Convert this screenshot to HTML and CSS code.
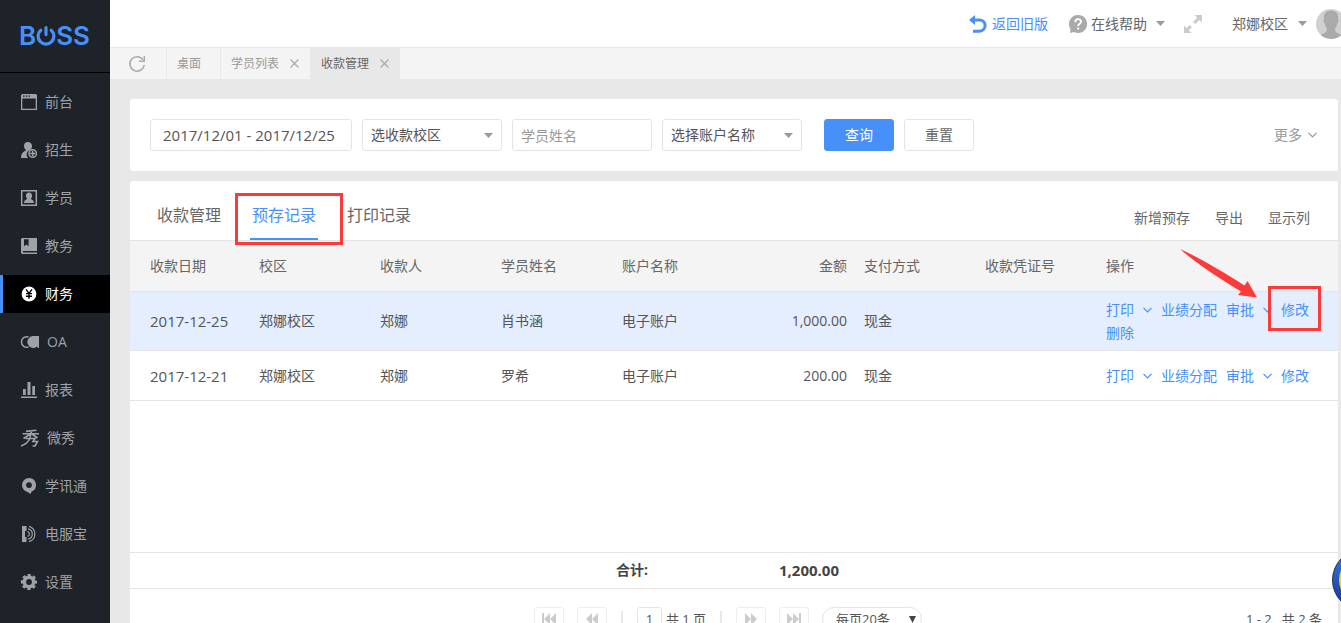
FILE: index.html
```html
<!DOCTYPE html>
<html lang="zh-CN">
<head>
<meta charset="utf-8">
<title>收款管理</title>
<link rel="stylesheet" href="styles.css">
</head>
<body>
<svg class="defs" aria-hidden="true">
  <symbol id="chev" viewBox="0 0 9 6"><path d="M.5 .8 4.5 4.8 8.5 .8" fill="none" stroke="currentColor" stroke-width="1.2"/></symbol>
  <symbol id="caret" viewBox="0 0 9 5"><path d="M0 0h9L4.500 5z" fill="currentColor"/></symbol>
  <symbol id="close" viewBox="0 0 8 8"><path d="M.5 .5l7 7M7.500 .5l-7 7" fill="none" stroke="currentColor" stroke-width="1.1"/></symbol>
</svg>
<div class="app">
  <aside class="sidebar">
    <div class="logo"><span>B</span><svg width="20" height="20" viewBox="0 0 20 20" fill="none" stroke="currentColor" stroke-width="3.200" stroke-linecap="round"><path d="M4.800 4.200A7.900 7.900 0 1 0 15.200 4.200M10 1.600v7"/></svg><span>SS</span></div>
    <nav class="menu">
      <a href="#"><svg viewBox="0 0 18 18"><path fill="currentColor" fill-rule="evenodd" d="M2.500 1h13A1.500 1.500 0 0 1 17 2.500V17H1V2.500A1.500 1.500 0 0 1 2.500 1zM2.300 5.600v10.100h13.400V5.600zM3 2.500v1.300h1.500V2.500zm2.700 0v1.300h1.500V2.500zm2.700 0v1.300h1.500V2.500z"/></svg>前台</a>
      <a href="#"><svg viewBox="0 0 18 18"><path fill="currentColor" d="M8 1a4 4 0 0 1 4 4.400c-.1 1.700-.8 2.700-1.500 3.300A4.800 4.800 0 0 0 8.200 17H1c0-4 1.500-6.200 4.800-7.500v-.8C4.700 8 4 6.500 4 5a4 4 0 0 1 4-4z"/><circle cx="12.700" cy="12.500" r="3.700" fill="none" stroke="currentColor" stroke-width="1.500"/><path d="M12.700 10v5M10.200 12.500h5" stroke="currentColor" stroke-width="1.500"/></svg>招生</a>
      <a href="#"><svg viewBox="0 0 18 18"><path fill="none" stroke="currentColor" stroke-width="1.500" d="M1.700 1.700h14.600v14.600H1.700z"/><path fill="currentColor" d="M9 3.500c2 0 3.100 1.400 3.100 3.200 0 1.300-.6 2.300-1.300 2.900.2 1.200 3 1 3.200 4.400H4c.2-3.400 3-3.200 3.200-4.400-.7-.6-1.300-1.600-1.300-2.900C5.900 4.900 7 3.500 9 3.500z"/></svg>学员</a>
      <a href="#"><svg viewBox="0 0 18 18"><path fill="currentColor" fill-rule="evenodd" d="M2.500 1H17v13H3.500c-1.100 0-1.100 1.400 0 1.400H17V17H2.800C1.700 17 1 16.300 1 15.200V2.500C1 1.600 1.600 1 2.500 1zM4 2.200v7l2.300-1.800 2.300 1.800v-7z"/></svg>教务</a>
      <a href="#" class="on"><svg viewBox="0 0 18 18"><circle cx="9" cy="9" r="7.400" fill="currentColor"/><path d="M6 4.300l3 4 3-4M9 8.300v5.500M6 8.600h6M6 11.200h6" fill="none" stroke="#000" stroke-width="1.400"/></svg>财务</a>
      <a href="#" class="wide"><svg viewBox="0 0 20 18"><path d="M8.500 4A5.300 5.300 0 1 0 8.500 14" fill="none" stroke="currentColor" stroke-width="1.500"/><path fill="currentColor" d="M12.800 3H19v12h-1.200l-.5-1.500A6 6 0 1 1 12.800 3z"/></svg>OA</a>
      <a href="#"><svg viewBox="0 0 18 18"><path fill="currentColor" d="M1 15.500h16V17H1zM3 8h2.700v6H3zM7.500 1h3v13h-3zM12.300 5H15v9h-2.700z"/></svg>报表</a>
      <a href="#" class="wide"><svg viewBox="0 0 20 18" fill="none" stroke="currentColor" stroke-width="1.600"><path d="M16.500 1.200 6 2.400M2.500 4.800h16.500M11.500 2 10 8.500M10.500 5 3.500 9.500M12 5l5.500 4M5.500 9.500h4.300C8.500 12.500 5.500 15.500 1 17M9 9.500h6l-2 3h4.500L15 17h-2.500"/></svg>微秀</a>
      <a href="#"><svg viewBox="0 0 18 18"><path fill="currentColor" fill-rule="evenodd" d="M9 1a7.100 7.100 0 0 1 2.500 13.700L10.500 17 7.500 15A7.100 7.100 0 0 1 9 1zm0 4.200a2.900 2.900 0 1 0 0 5.800 2.900 2.900 0 0 0 0-5.800z"/></svg>学讯通</a>
      <a href="#"><svg viewBox="0 0 18 18"><path fill="currentColor" d="M2 1h4.500v5H5v6h1.500v5H2z"/><path d="M7.500 6.500a2.600 2.600 0 0 1 0 5M8 3.800a5.300 5.300 0 0 1 0 10.400M9 1.300a8 8 0 0 1 0 15.400" fill="none" stroke="currentColor" stroke-width="1.200"/></svg>电服宝</a>
      <a href="#"><svg viewBox="0 0 18 18"><circle cx="9" cy="9" r="4.700" fill="none" stroke="currentColor" stroke-width="3.600"/><circle cx="9" cy="9" r="7" fill="none" stroke="currentColor" stroke-width="2.200" stroke-dasharray="3.200 2.298" stroke-dashoffset="1.600"/></svg>设置</a>
    </nav>
  </aside>

  <main class="main">
    <header class="topbar">
      <a href="#" class="back"><svg width="18" height="18" viewBox="0 0 18 18"><path d="M4 5h6.500a5.600 5.600 0 0 1 0 11.200H4" fill="none" stroke="currentColor" stroke-width="3"/><path fill="currentColor" d="M0 5 6 0v10z"/></svg>返回旧版</a>
      <button class="help"><svg width="18" height="18" viewBox="0 0 18 18"><path fill="#aaa" d="M9 0a9 9 0 1 1-4 17l-4 1 .5-4A9 9 0 0 1 9 0z"/><path d="M6.200 7.200c0-4 5.800-4 5.800-.6 0 2.200-2.800 2-2.800 4.400M9.200 12.500v2" fill="none" stroke="#fff" stroke-width="1.900"/></svg>在线帮助<svg class="caret"><use href="#caret"/></svg></button>
      <button class="full" aria-label="全屏"><svg width="18" height="18" viewBox="0 0 18 18"><path fill="#ccc" d="M10.500 0H18v7.500l-2.600-2.600-4.200 4.200-2.200-2.200 4.200-4.200zM0 10.500l2.600 2.600 3.200-3.200L8 12.100l-3.200 3.200L7.500 18H0z"/></svg></button>
      <button class="campus">郑娜校区<svg class="caret"><use href="#caret"/></svg></button>
      <svg class="avatar" viewBox="0 0 30 30"><defs><clipPath id="av"><circle cx="15" cy="15" r="15"/></clipPath></defs><g clip-path="url(#av)"><path fill="#d0d0d0" d="M0 0h30v30H0z"/><path fill="#aaa" d="M15 1.500c5 0 7.500 3 7 8.500 1 1 .6 3.500-.8 4.200-.6 3-1.200 4.300-2.200 5.300 0 3.500 1.500 4.500 6 6V30H5v-4.500c4.500-1.500 6-2.500 6-6-1-1-1.600-2.300-2.200-5.300C7.400 13.500 7 11 8 10c-.5-5.500 2-8.500 7-8.500z"/></g></svg>
    </header>

    <nav class="pages">
      <button class="refresh" aria-label="刷新"><svg width="18" height="18" viewBox="0 0 18 18"><path d="M15 4.800A7.200 7.200 0 1 0 16.200 10" fill="none" stroke="#aaa" stroke-width="1.500"/><path fill="none" stroke="#aaa" stroke-width="1.500" d="M16.300 1v5.300H11"/></svg></button>
      <a href="#" class="home">桌面</a>
      <a href="#">学员列表<svg><use href="#close"/></svg></a>
      <a href="#" class="on">收款管理<svg><use href="#close"/></svg></a>
    </nav>

    <div class="content">
      <form class="card filters">
        <input class="date" type="text" aria-label="日期" value="2017/12/01 - 2017/12/25">
        <span class="select"><select aria-label="收款校区"><option>选收款校区</option></select><svg class="caret"><use href="#caret"/></svg></span>
        <input type="text" aria-label="学员姓名" placeholder="学员姓名">
        <span class="select"><select aria-label="账户名称"><option>选择账户名称</option></select><svg class="caret"><use href="#caret"/></svg></span>
        <button type="button" class="btn primary">查询</button>
        <button type="button" class="btn">重置</button>
        <button type="button" class="more">更多<svg class="chev"><use href="#chev"/></svg></button>
      </form>

      <section class="card records">
        <div class="head">
          <nav class="tabs">
            <a href="#">收款管理</a>
            <a href="#" class="on">预存记录<i class="mark mark-tab"></i></a>
            <a href="#">打印记录</a>
          </nav>
          <div class="tools"><a href="#">新增预存</a><a href="#">导出</a><a href="#">显示列</a></div>
        </div>
        <div class="body">
          <table>
            <colgroup><col class="c-first"><col class="c" span="7"><col></colgroup>
            <thead><tr><th>收款日期</th><th>校区</th><th>收款人</th><th>学员姓名</th><th>账户名称</th><th class="num">金额</th><th>支付方式</th><th>收款凭证号</th><th>操作</th></tr></thead>
            <tbody>
              <tr class="sel"><td class="day">2017-12-25</td><td>郑娜校区</td><td>郑娜</td><td>肖书涵</td><td>电子账户</td><td class="num">1,000.00</td><td>现金</td><td></td>
                <td><div class="ops"><a href="#">打印<svg class="chev"><use href="#chev"/></svg></a><a href="#">业绩分配</a><a href="#">审批<svg class="chev"><use href="#chev"/></svg></a><a href="#" class="edit">修改<i class="mark mark-edit"></i><svg class="arrow" viewBox="0 0 78 50"><path fill="#fb3a3a" d="M0 0C18 8 42 22 64.500 36.500L67.500 32 77 48.500 58 46l3-3.500C42 31 18 16 0 0z"/></svg></a><a href="#">删除</a></div></td></tr>
              <tr><td class="day">2017-12-21</td><td>郑娜校区</td><td>郑娜</td><td>罗希</td><td>电子账户</td><td class="num">200.00</td><td>现金</td><td></td>
                <td><div class="ops"><a href="#">打印<svg class="chev"><use href="#chev"/></svg></a><a href="#">业绩分配</a><a href="#">审批<svg class="chev"><use href="#chev"/></svg></a><a href="#">修改</a></div></td></tr>
            </tbody>
          </table>
        </div>
        <table class="total">
          <colgroup><col class="c-first"><col class="c" span="7"><col></colgroup>
          <tbody><tr><td colspan="4"></td><td class="sum">合计:</td><td class="num">1,200.00</td><td colspan="3"></td></tr></tbody>
        </table>
        <div class="pager">
          <div class="ctrl">
            <button aria-label="首页"><svg viewBox="0 0 16 12"><path d="M1 0h2v12H1zM9 0v12L3 6zM15 0v12L9 6z"/></svg></button>
            <button aria-label="上一页"><svg viewBox="0 0 16 12"><path d="M8 0v12L2 6zM14 0v12L8 6z"/></svg></button>
            <i class="bar"></i>
            <label class="num-page"><input type="text" value="1" aria-label="页码">共 1 页</label>
            <i class="bar"></i>
            <button aria-label="下一页"><svg viewBox="0 0 16 12"><path d="M2 0v12l6-6zM8 0v12l6-6z"/></svg></button>
            <button aria-label="末页"><svg viewBox="0 0 16 12"><path d="M1 0v12l6-6zM7 0v12l6-6zM13 0h2v12h-2z"/></svg></button>
            <span class="select size"><select aria-label="每页条数"><option>每页20条</option></select><svg class="caret" viewBox="0 0 7 7" preserveAspectRatio="none"><path d="M0 0h7L3.500 7z" fill="currentColor"/></svg></span>
          </div>
          <span class="range">1 - 2 &nbsp; 共 2 条</span>
        </div>
      </section>
    </div>
  </main>
</div>
<svg class="ball" viewBox="0 0 62 62"><defs><linearGradient id="bl" x2="0" y2="1"><stop offset="0" stop-color="#3b7de0"/><stop offset="1" stop-color="#14309c"/></linearGradient></defs><circle cx="31" cy="31" r="30.500" fill="url(#bl)" stroke="#234"/><circle cx="31" cy="31" r="24" fill="#f5d418"/></svg>
</body>
</html>
```

FILE: styles.css
```css
* { box-sizing: border-box; }
body {
  margin: 0;
  height: 100vh;
  overflow: hidden;
  background: #e8e8e8;
  color: #555;
  font: 14px/20px "Open Sans", "Noto Sans CJK SC", sans-serif;
}
a { color: inherit; text-decoration: none; }
button, input, select { font: inherit; color: inherit; }
button { border: 0; padding: 0; background: none; }
.defs { position: absolute; width: 0; height: 0; }
.caret { width: 9px; height: 5px; color: #999; }
.chev { width: 9px; height: 6px; }

.app { display: flex; height: 100vh; }
.sidebar { flex: none; width: 110px; background: #1e2229; color: #9ea3aa; }
.logo {
  display: flex;
  align-items: center;
  height: 73px;
  padding-left: 19px;
  border-bottom: 1px solid #000;
  color: #478ff9;
  font: 600 26px/74px Inter, sans-serif;
}
.menu { display: flex; flex-direction: column; gap: 10px; padding-top: 10px; }
.menu a { display: flex; align-items: center; gap: 7px; height: 38px; padding-left: 20px; }
.menu svg { width: 18px; height: 18px; }
.menu .wide svg { width: 20px; }
.menu .on { background: #000; color: #fff; border-left: 3px solid #478ff9; padding-left: 17px; }

.main { flex: 1; min-width: 0; display: flex; flex-direction: column; }
.topbar {
  flex: none;
  display: flex;
  align-items: center;
  justify-content: flex-end;
  height: 48px;
  background: #fff;
  border-bottom: 1px solid #e8e8e8;
  overflow: hidden;
}
.topbar a, .topbar button { display: flex; align-items: center; }
.back { gap: 5px; color: #478ff9; }
.help { gap: 4px; margin-left: 21px; color: #666; }
.help .caret { margin-left: 5px; }
.full { margin-left: 19px; }
.campus { gap: 10px; margin-left: 30px; color: #666; }
.avatar { flex: none; width: 30px; height: 30px; margin: 0 -5px 0 9px; }

.pages { flex: none; display: flex; height: 31px; background: #f4f4f4; color: #999; font-size: 12px; line-height: 32px; }
.pages a { display: flex; align-items: center; gap: 11px; padding: 0 11px 0 10px; border-left: 1px solid #e8e8e8; }
.pages .home { padding-right: 19px; }
.pages a svg { width: 9px; height: 9px; color: #aaa; }
.pages .on { background: #e8e8e8; color: #666; }
.refresh { display: flex; align-items: center; width: 56px; padding-left: 18px; }

.content { display: flex; flex-direction: column; gap: 10px; padding: 20px 3px 0 20px; }
.card { background: #fff; border-radius: 3px; }
.filters { display: flex; align-items: center; gap: 10px; padding: 20px; }
.filters input, .filters select {
  width: 140px;
  height: 32px;
  padding: 0 8px;
  border: 1px solid #e4e4e4;
  border-radius: 3px;
  background: #fff;
}
.filters .date { width: 202px; padding: 0 12px; font-size: 15px; }
input::placeholder { color: #999; }
.select { position: relative; display: flex; }
.select select { appearance: none; }
.select .caret { position: absolute; right: 12px; top: 50%; margin-top: -2px; pointer-events: none; }
.filters .caret { right: 9px; }
.btn { width: 70px; height: 32px; border: 1px solid #e4e4e4; border-radius: 3px; color: #666; }
.primary { margin-left: 12px; border-color: #478ff9; background: #478ff9; color: #fff; }
.more { display: flex; align-items: center; gap: 6px; margin: 0 1px 0 auto; color: #999; }

.head { display: flex; justify-content: space-between; height: 60px; padding: 0 28px 0 25px; border-bottom: 1px solid #e4e4e4; color: #666; }
.tabs { display: flex; gap: 27px; font-size: 16px; }
.tabs a { position: relative; padding: 24px 2px 0; }
.tabs .on { color: #478ff9; border-bottom: 2px solid #478ff9; }
.tools { display: flex; gap: 25px; padding-top: 27px; }
.body { min-height: 311px; }
table { width: 100%; border-collapse: separate; border-spacing: 0; table-layout: fixed; }
.c-first { width: 120px; }
.c { width: 121px; }
th, td { height: 50px; padding: 0 8px 0 9px; border-bottom: 1px solid #e4e4e4; text-align: left; font-weight: 400; white-space: nowrap; }
th { height: 51px; background: #f4f4f4; color: #666; }
th:first-child, td:first-child { padding-left: 20px; }
.day { font-size: 15px; }
.num { text-align: right; }
.sel td { height: 59px; background: #e5eeff; }
.ops { display: flex; flex-wrap: wrap; gap: 3px 9px; color: #478ff9; }
.ops a { position: relative; display: flex; align-items: center; gap: 9px; }

.mark { position: absolute; border: 3px solid #fb3a3a; }
.mark-tab { inset: 12px -25px -7px -15px; }
.edit .mark-edit { inset: -14px -12px -11px -13px; }
.edit .arrow { position: absolute; right: 51px; bottom: 21px; width: 78px; height: 50px; }

.total td { height: 37px; padding-bottom: 2px; border-top: 1px solid #e4e4e4; font-weight: 700; color: #444; }
.total .sum { padding-left: 3px; }
.total .num { padding-right: 16px; font-size: 15px; }
.pager { position: relative; display: flex; justify-content: center; padding: 18px 16px; }
.ctrl { display: flex; align-items: center; gap: 13px; margin-right: 12px; font-size: 13px; }
.ctrl button { width: 30px; height: 24px; border: 1px solid #eee; border-radius: 3px; }
.ctrl button svg { display: block; width: 16px; height: 12px; margin: 0 auto; fill: #ccc; }
.bar { width: 2px; height: 16px; background: #e8e8e8; margin: 0 1px; }
.num-page { display: flex; align-items: center; gap: 4px; }
.num-page input { width: 25px; height: 24px; padding: 0; text-align: center; border: 1px solid #e4e4e4; border-radius: 3px; }
.size select { width: 100px; height: 24px; padding: 0 13px; border: 1px solid #e4e4e4; border-radius: 12px; background: #fff; }
.size .caret { right: 6px; width: 7px; height: 7px; margin-top: -3px; color: #444; }
.range { position: absolute; right: 16px; top: 20px; font-size: 13px; }
.ball { position: fixed; right: -53px; bottom: 12px; width: 62px; height: 62px; }
```
